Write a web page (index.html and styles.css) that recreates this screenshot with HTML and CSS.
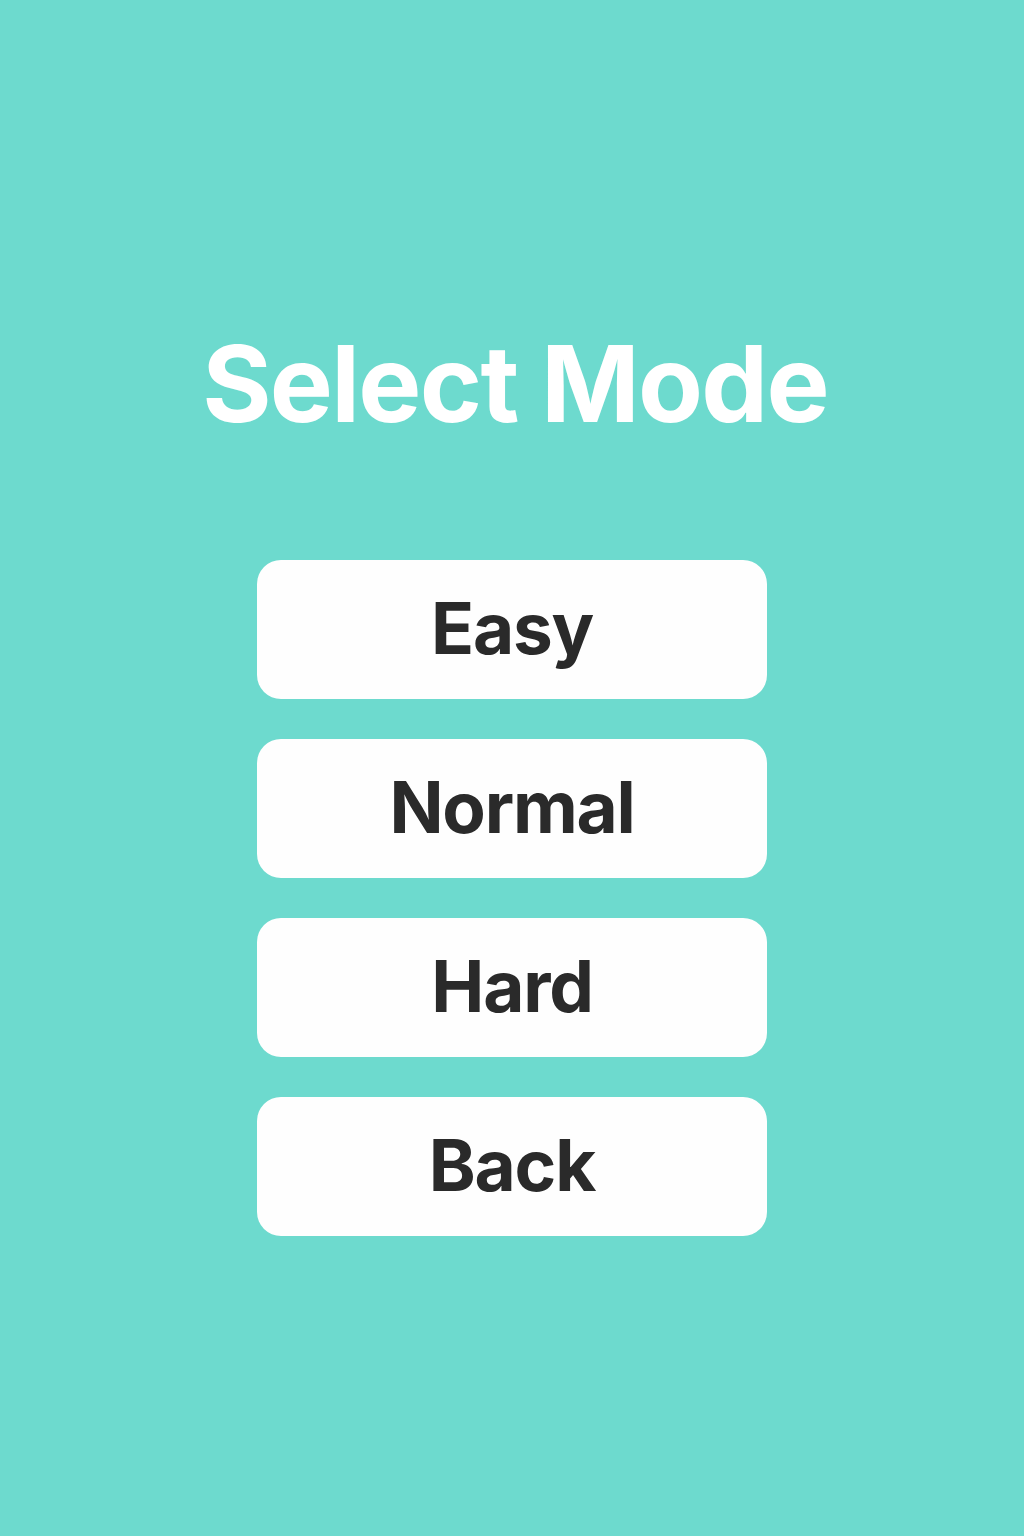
FILE: index.html
```html
<!DOCTYPE html>
<html lang="en">
<head>
<meta charset="utf-8">
<title>Select Mode</title>
<link rel="stylesheet" href="styles.css">
</head>
<body>
<main class="screen">
  <h1 class="title">Select Mode</h1>
  <nav class="menu">
    <button class="menu-btn">Easy</button>
    <button class="menu-btn">Normal</button>
    <button class="menu-btn">Hard</button>
    <button class="menu-btn">Back</button>
  </nav>
</main>
</body>
</html>
```
FILE: styles.css
```css
html, body {
  margin: 0;
  padding: 0;
  background: #6ddace;
}
.screen {
  box-sizing: border-box;
  height: 1536px;
  padding-top: 331px;
  display: flex;
  flex-direction: column;
  align-items: center;
  font-family: Inter, "Liberation Sans", sans-serif;
}
.title {
  margin: 0;
  padding-left: 6px;
  font-size: 106px;
  line-height: 1;
  font-weight: 700;
  color: #ffffff;
  letter-spacing: -1.7px;
}
.menu {
  margin-top: 123px;
  display: flex;
  flex-direction: column;
  gap: 40px;
}
.menu-btn {
  width: 510px;
  height: 139px;
  border: none;
  border-radius: 24px;
  background: #fefefe;
  color: #2a2a2a;
  font-family: Inter, "Liberation Sans", sans-serif;
  font-size: 71px;
  font-weight: 700;
  letter-spacing: -1.2px;
  padding: 0;
  padding-bottom: 4px;
}
```
